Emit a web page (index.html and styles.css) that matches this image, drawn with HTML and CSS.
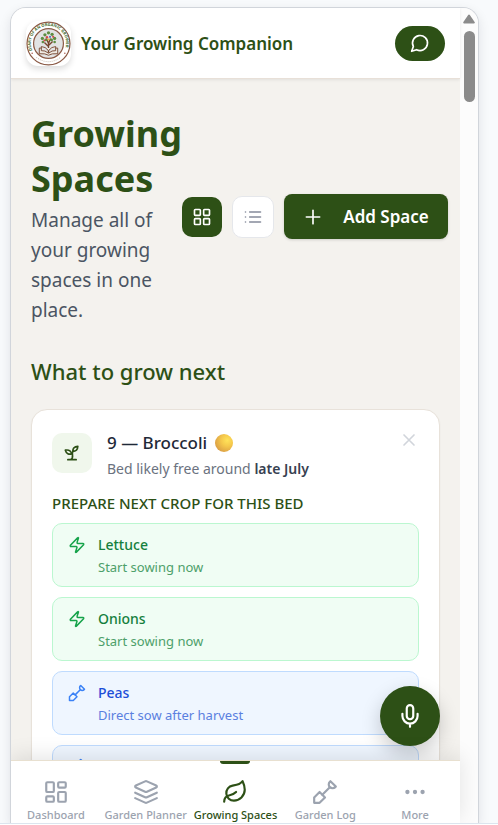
FILE: index.html
```html
<!DOCTYPE html>
<html lang="en">
<head>
<meta charset="utf-8">
<meta name="viewport" content="width=device-width, initial-scale=1">
<title>Growing Spaces</title>
<link rel="stylesheet" href="styles.css">
</head>
<body>
<svg class="sprite" aria-hidden="true">
  <symbol id="shovel" viewBox="0 0 24 24"><path d="M2 22v-5l5-5 5 5-5 5z"/><path d="M9.5 14.5 16 8"/><path d="m17 2 5 5-.5.5a3.53 3.53 0 0 1-5 0 3.53 3.53 0 0 1 0-5L17 2"/></symbol>
  <symbol id="zap" viewBox="0 0 24 24"><path d="M4 14a1 1 0 0 1-.78-1.63l9.9-10.2a.5.5 0 0 1 .86.46l-1.92 6.02A1 1 0 0 0 13 10h7a1 1 0 0 1 .78 1.63l-9.9 10.2a.5.5 0 0 1-.86-.46l1.92-6.02A1 1 0 0 0 11 14z"/></symbol>
</svg>
<div class="page">
  <div class="frame">
    <div class="app">
      <header class="topbar">
        <svg class="logo" viewBox="0 0 44 44" aria-hidden="true">
          <defs><path id="ring" d="M6.500 29.500A17.200 17.200 0 1 1 37.500 29.500"/></defs>
          <circle cx="22" cy="22" r="21" fill="#fff" stroke="#8b5a46" stroke-width="1.2"/>
          <circle cx="22" cy="22" r="14.6" fill="#e2e3e4" stroke="#8b5a46" stroke-width="1.2"/>
          <text class="logo-text"><textPath href="#ring" startOffset="1">DIARY OF AN ORGANIC GROWER</textPath></text>
          <path d="M10 35.500Q22 44 34 35.500" fill="none" stroke="#cfc3b8" stroke-width="1" stroke-dasharray="1 1"/>
          <circle cx="6" cy="31.500" r=".7" fill="#a34e40"/><circle cx="38" cy="31.500" r=".7" fill="#a34e40"/>
          <path d="M22 31V20M22 25l-4-4M22 24l4-4M22 22l-2-5M22 22l2-5" fill="none" stroke="#76452f" stroke-width="1.3"/>
          <g fill="#5d8d42"><circle cx="22" cy="11.5" r="1.6"/><circle cx="18.5" cy="13.5" r="1.6"/><circle cx="25.5" cy="13" r="1.6"/><circle cx="16" cy="17" r="1.6"/><circle cx="28" cy="17" r="1.6"/><circle cx="19.5" cy="18.5" r="1.4"/><circle cx="25" cy="18.5" r="1.4"/><circle cx="16.5" cy="20.5" r="1.3"/><circle cx="28" cy="20.5" r="1.3"/></g>
          <g fill="#d44a4a"><circle cx="20.5" cy="15.8" r="1.2"/><circle cx="26.5" cy="15.5" r="1"/><circle cx="18" cy="19" r="1"/></g>
          <circle cx="23.5" cy="15.5" r="1.1" fill="#5573c7"/><circle cx="22" cy="18" r="1" fill="#e5bd39"/>
          <path d="M22 31.5q-3.500-3-7-2.500v-4q4 0 7 4 3-4 7-4v4q-3.500-.5-7 2.500zM15 26.500h-2V32q6-.5 9 1.500 3-2 9-1.500v-5.500h-2" fill="#eee9e2" stroke="#76452f" stroke-width=".9"/>
        </svg>
        <span class="brand">Your Growing Companion</span>
        <button class="chat" aria-label="Open chat"><svg class="icon" viewBox="0 0 24 24" width="20" height="20"><path d="M7.900 20A9 9 0 1 0 4 16.100L2 22Z"/></svg></button>
      </header>
      <main>
        <section class="intro">
          <div>
            <h1>Growing Spaces</h1>
            <p>Manage all of your growing spaces in one place.</p>
          </div>
          <div class="actions">
            <button class="view active" aria-label="Grid view"><svg class="icon" viewBox="0 0 24 24" width="20" height="20"><rect x="3" y="3" width="7" height="7" rx="1"/><rect x="14" y="3" width="7" height="7" rx="1"/><rect x="14" y="14" width="7" height="7" rx="1"/><rect x="3" y="14" width="7" height="7" rx="1"/></svg></button>
            <button class="view" aria-label="List view"><svg class="icon" viewBox="0 0 24 24" width="20" height="20"><path d="M3 6h.01M3 12h.01M3 18h.01M8 6h13M8 12h13M8 18h13"/></svg></button>
            <button class="add"><svg class="icon" viewBox="0 0 24 24" width="20" height="20"><path d="M4 12h16M12 4v16"/></svg>Add Space</button>
          </div>
        </section>
        <h2>What to grow next</h2>
        <article class="card">
          <div class="card-head">
            <span class="tile"><svg class="icon" viewBox="0 0 24 24" width="20" height="20"><path d="M7 20h10M10 20c5.500-2.500.8-6.400 3-10"/><path d="M9.500 9.400c1.100.8 1.800 2.200 2.300 3.700-2 .4-3.500.4-4.800-.3-1.200-.6-2.300-1.900-3-4.200 2.800-.5 4.400 0 5.500.8zM14.100 6a7 7 0 0 0-1.100 4c1.900-.1 3.300-.6 4.300-1.400 1-1 1.600-2.300 1.700-4.600-2.700.1-4 1-4.900 2z"/></svg></span>
            <div class="bed">
              <h3>9 — Broccoli <span class="moon" role="img" aria-label="Full moon"></span></h3>
              <p>Bed likely free around <strong>late July</strong></p>
            </div>
            <button class="close" aria-label="Dismiss"><svg class="icon" viewBox="0 0 24 24" width="20" height="20"><path d="M18 6 6 18M6 6l12 12"/></svg></button>
          </div>
          <h4>PREPARE NEXT CROP FOR THIS BED</h4>
          <ul class="crops">
            <li><svg class="icon" width="18" height="18"><use href="#zap"/></svg><div><b>Lettuce</b><span>Start sowing now</span></div></li>
            <li><svg class="icon" width="18" height="18"><use href="#zap"/></svg><div><b>Onions</b><span>Start sowing now</span></div></li>
            <li class="later"><svg class="icon" width="18" height="18"><use href="#shovel"/></svg><div><b>Peas</b><span>Direct sow after harvest</span></div></li>
            <li class="later"><svg class="icon" width="18" height="18"><use href="#shovel"/></svg><div><b></b><span></span></div></li>
          </ul>
        </article>
      </main>
      <button class="mic" aria-label="Voice input"><svg class="icon" viewBox="0 0 24 24" width="26" height="26"><path d="M12 2a3 3 0 0 0-3 3v7a3 3 0 0 0 6 0V5a3 3 0 0 0-3-3Z"/><path d="M19 10v2a7 7 0 0 1-14 0v-2M12 19v3"/></svg></button>
      <nav class="tabs">
        <a href="#"><svg class="icon" viewBox="0 0 24 24" width="26" height="26"><rect x="3" y="3" width="7" height="9" rx="1"/><rect x="14" y="3" width="7" height="5" rx="1"/><rect x="14" y="12" width="7" height="9" rx="1"/><rect x="3" y="16" width="7" height="5" rx="1"/></svg>Dashboard</a>
        <a href="#"><svg class="icon" viewBox="0 0 24 24" width="26" height="26"><path d="M12.830 2.180a2 2 0 0 0-1.660 0L2.600 6.080a1 1 0 0 0 0 1.830l8.580 3.910a2 2 0 0 0 1.660 0l8.580-3.900a1 1 0 0 0 0-1.830Z"/><path d="m22 17.650-9.170 4.160a2 2 0 0 1-1.660 0L2 17.650M22 12.650l-9.170 4.160a2 2 0 0 1-1.660 0L2 12.650"/></svg>Garden Planner</a>
        <a href="#" class="current" aria-current="page"><svg class="icon" viewBox="0 0 24 24" width="26" height="26"><path d="M11 20A7 7 0 0 1 9.800 6.100C15.500 5 17 4.480 19 2c1 2 2 4.180 2 8 0 5.500-4.780 10-10 10Z"/><path d="M2 21c0-3 1.850-5.360 5.080-6C9.500 14.520 12 13 13 12"/></svg>Growing Spaces</a>
        <a href="#"><svg class="icon" width="26" height="26"><use href="#shovel"/></svg>Garden Log</a>
        <a href="#"><svg class="icon dots" viewBox="0 0 24 24" width="26" height="26"><circle cx="5" cy="12" r="1"/><circle cx="12" cy="12" r="1"/><circle cx="19" cy="12" r="1"/></svg>More</a>
      </nav>
    </div>
    <div class="scrollbar" aria-hidden="true"><svg width="12" height="10" viewBox="0 0 12 10"><path d="M6 1.500 10.800 8.500H1.200Z" fill="#8b8b8b" stroke="#8b8b8b" stroke-width="2" stroke-linejoin="round"/></svg><span class="thumb"></span></div>
  </div>
</div>
</body>
</html>
```
FILE: styles.css
```css
* { box-sizing: border-box; margin: 0; }
body { background: #fff; font-family: "Segoe UI", "Noto Sans", sans-serif; color: #1f2937; }
button { border: 0; padding: 0; font: inherit; display: flex; align-items: center; justify-content: center; }
.sprite { display: none; }
.icon { display: block; flex: none; fill: none; stroke: currentColor; stroke-width: 2; stroke-linecap: round; stroke-linejoin: round; }

.page { height: calc(100vh - 1px); padding: 7px 19px 0 10px; background: #f8fafc; border-bottom: 1px solid #dce5ee; display: flex; overflow: hidden; }
.frame { flex: 1; min-width: 0; display: flex; border: 1px solid #d1d5db; border-bottom: 0; border-radius: 16px 16px 0 0; overflow: hidden; background: #fcfcfc; box-shadow: 0 4px 12px rgba(15, 23, 42, .1); }
.app { position: relative; flex: 1; min-width: 0; display: flex; flex-direction: column; background: #f4f2ee; }

.topbar { position: relative; flex: none; height: 71px; padding: 0 15px; display: flex; align-items: center; gap: 10px; background: #fff; border-bottom: 1px solid #e8e0d8; box-shadow: 0 1px 3px rgba(0, 0, 0, .08); }
.logo { width: 45px; height: 45px; border-radius: 12px; background: #fff; box-shadow: 0 3px 6px rgba(0, 0, 0, .14); }
.logo-text { font-size: 4px; font-weight: 700; fill: #3f6b2a; }
.brand { flex: 1; font-size: 17px; font-weight: 600; color: #2d5016; white-space: nowrap; }
.chat { width: 50px; height: 35px; border-radius: 18px; background: #2d5016; color: #fff; }

main { flex: 1; min-height: 0; overflow: hidden; padding: 32px 20px 0; }
.intro { display: grid; grid-template-columns: minmax(0, 1fr) auto; align-items: center; margin-right: -8px; }
h1 { font-size: 36px; line-height: 45px; font-weight: 700; color: #2d5016; }
.intro p { margin-top: 4px; font-size: 19px; line-height: 30px; color: #4b5563; padding-right: 20px; }
.actions { display: flex; align-items: center; gap: 10px; padding-bottom: 3px; }
.view { width: 42px; height: 42px; border-radius: 10px; background: #fff; border: 1px solid #e5e7eb; color: #858b9b; }
.view.active { width: 40px; height: 40px; background: #2d5016; border: 0; color: #fff; }
.add { width: 164px; height: 45px; gap: 20px; border-radius: 8px; background: #2d5016; color: #fff; font-size: 17px; font-weight: 600; box-shadow: 0 1px 3px rgba(0, 0, 0, .15); white-space: nowrap; }
h2 { margin: 30px 0 22px; font-size: 22px; line-height: 32px; font-weight: 500; color: #2d5016; }

.card { background: #fff; border: 1px solid #e8e2da; border-radius: 16px; padding: 20px; box-shadow: 0 1px 2px rgba(0, 0, 0, .05); }
.card-head { display: flex; align-items: flex-start; gap: 15px; }
.tile { width: 40px; height: 40px; margin-top: 3px; border-radius: 10px; background: #f0f7ec; color: #2d5016; display: grid; place-items: center; }
.bed { flex: 1; }
h3 { display: flex; align-items: center; gap: 8px; font-size: 17px; line-height: 26px; font-weight: 500; white-space: nowrap; }
.moon { width: 18px; height: 18px; border-radius: 50%; background: radial-gradient(circle at 68% 35%, #ffe35a 0, #f5c84c 35%, #dfa646 70%, #cf8a4c 100%); }
.bed p { font-size: 14px; line-height: 26px; color: #6b7280; }
.bed strong { font-weight: 600; color: #374151; }
.close { width: 20px; height: 20px; background: none; color: #d1d5db; }
h4 { margin: 9px 0 8px; font-size: 15px; line-height: 24px; font-weight: 500; color: #2d5016; }
.crops { list-style: none; padding: 0; display: grid; gap: 10px; }
.crops li { min-height: 64px; display: flex; gap: 12px; padding: 9px 15px 7px; border: 1px solid #bbf7d0; border-radius: 10px; background: #f0fdf4; color: #16a34a; }
.crops .icon { margin-top: 3px; }
.crops b { display: block; font-size: 14px; line-height: 23px; font-weight: 500; color: #15803d; }
.crops span { display: block; font-size: 13px; line-height: 23px; color: #4da06a; }
.crops .later { background: #eff6ff; border-color: #bfdbfe; color: #3b82f6; }
.crops .later b { color: #1d4ed8; }
.crops .later span { color: #5a7fe0; }

.mic { position: absolute; right: 20px; bottom: 77px; width: 60px; height: 60px; border-radius: 50%; background: #2d5016; color: #fff; box-shadow: 0 8px 20px rgba(0, 0, 0, .2); }
.tabs { position: relative; flex: none; height: 63px; display: grid; grid-template-columns: repeat(5, minmax(0, 1fr)); background: #fff; border-top: 1px solid #e8e0d0; box-shadow: 0 -4px 20px rgba(0, 0, 0, .1); }
.tabs a { position: relative; display: flex; flex-direction: column; align-items: center; padding-top: 18px; color: #9ca3af; font-size: 11px; line-height: 20px; font-weight: 500; text-decoration: none; white-space: nowrap; }
.tabs .current { color: #2d5016; }
.current::before { content: ""; position: absolute; top: 0; width: 30px; height: 3px; border-radius: 0 0 3px 3px; background: #2d5016; }
.dots { fill: currentColor; }

.scrollbar { flex: none; width: 18px; padding-top: 6px; display: flex; flex-direction: column; align-items: center; gap: 7px; background: #fcfcfc; }
.thumb { width: 11px; height: 71px; border-radius: 6px; background: #8b8b8b; }
```
